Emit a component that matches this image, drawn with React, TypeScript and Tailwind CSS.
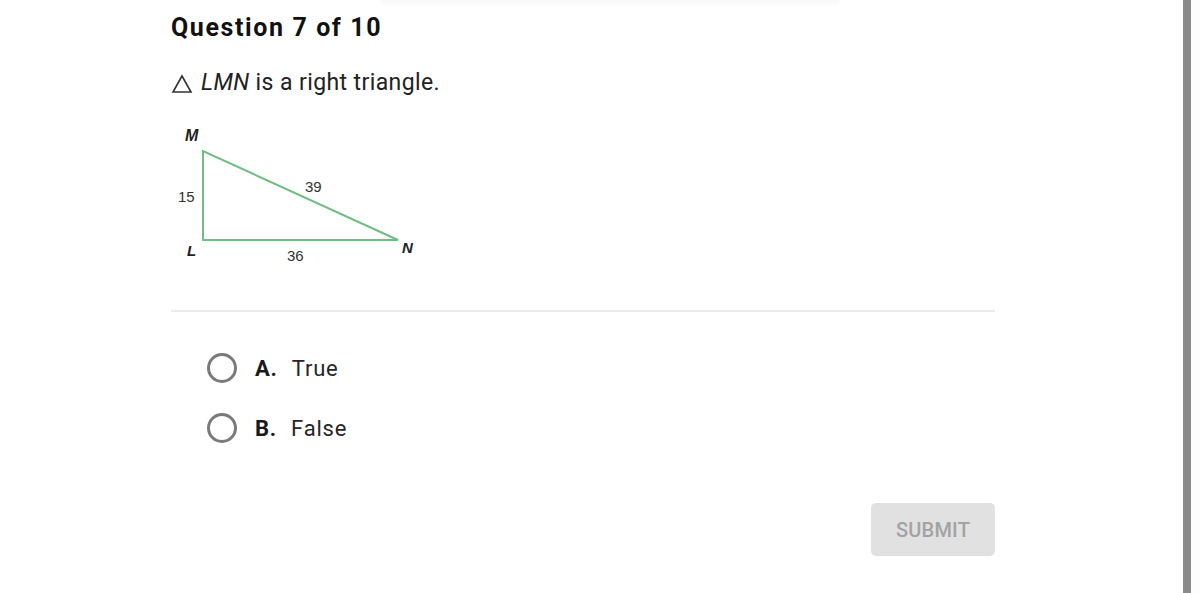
import React from "react";

function Triangle() {
  const f = "Liberation Sans, Arial, sans-serif";
  return (
    <svg width="260" height="145" viewBox="0 0 260 145" className="block">
      <polygon points="32,26 32,115 227,115" fill="none" stroke="#72bd84" strokeWidth="2" />
      <text x="14" y="16" fontFamily={f} fontSize="16" fontWeight="bold" fontStyle="italic" fill="#222" letterSpacing="-0.5">M</text>
      <text x="7" y="77" fontFamily={f} fontSize="15" fill="#333">15</text>
      <text x="134" y="67" fontFamily={f} fontSize="15" fill="#333">39</text>
      <text x="16" y="131" fontFamily={f} fontSize="15" fontWeight="bold" fontStyle="italic" fill="#222">L</text>
      <text x="116" y="136" fontFamily={f} fontSize="15" fill="#333">36</text>
      <text x="231" y="128" fontFamily={f} fontSize="15" fontWeight="bold" fontStyle="italic" fill="#222">N</text>
    </svg>
  );
}

function Option({ letter, text }: { letter: string; text: string }) {
  return (
    <div className="flex items-center h-[30px]">
      <div className="w-[30px] h-[30px] rounded-full border-[3px] border-[#7a7a7a] box-border" />
      <span className="ml-[18px] font-bold text-[22px] tracking-[0.8px] text-[#1a1a1a]">{letter}</span>
      <span className="ml-[14px] text-[22px] tracking-[0.8px] text-[#262626]">{text}</span>
    </div>
  );
}

export default function App() {
  return (
    <div
      className="w-[1200px] h-[593px] flex bg-white overflow-hidden"
      style={{ fontFamily: "Roboto, 'Liberation Sans', Arial, sans-serif" }}
    >
      <div className="flex-1 pl-[171px] relative">
        <div className="absolute top-0 left-[380px] w-[460px] h-[8px] bg-gradient-to-b from-[#f8f8f8] to-white rounded-b-full" />
        <div className="w-[824px] relative">
          <h1 className="pt-[12px] text-[25px] leading-[32px] font-bold text-[#111] tracking-[1.6px]">
            Question 7 of 10
          </h1>
          <p className="mt-[24px] text-[23px] leading-[30px] text-[#222] flex items-center tracking-[0.4px]">
            <svg width="22" height="20" viewBox="0 0 22 20" className="mr-[8px] mt-[2px]">
              <polygon points="11,2 20,18 2,18" fill="none" stroke="#333" strokeWidth="1.6" />
            </svg>
            <span className="italic">LMN</span>
            <span className="ml-[6px]">is a right triangle.</span>
          </p>
          <div className="mt-[27px]">
            <Triangle />
          </div>
          <div className="mt-[40px] h-[2px] bg-[#ebebeb]" />
          <div className="mt-[41px] pl-[36px] flex flex-col gap-[30px]">
            <Option letter="A." text="True" />
            <Option letter="B." text="False" />
          </div>
          <div className="mt-[60px] flex justify-end">
            <button className="w-[124px] h-[53px] rounded-[5px] bg-[#e1e1e1] text-[#a3a3a3] text-[20px] font-medium tracking-[0.2px]">
              SUBMIT
            </button>
          </div>
        </div>
      </div>
      <div className="w-[8px] bg-[#8a8a8a]" />
      <div className="w-[9px] bg-[#fdfdfd]" />
    </div>
  );
}
